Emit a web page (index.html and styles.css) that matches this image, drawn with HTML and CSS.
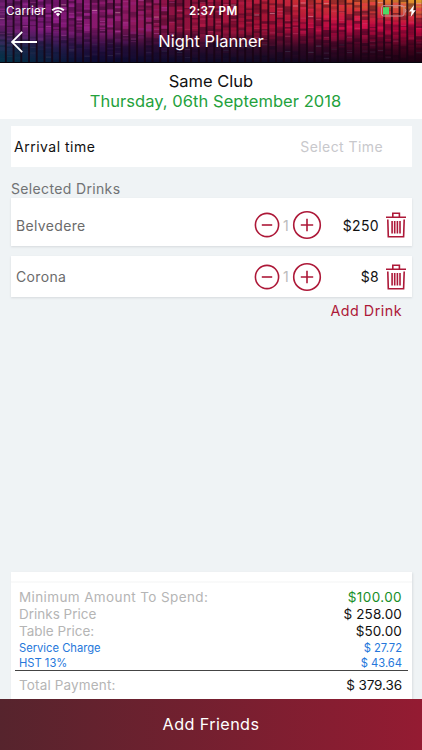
FILE: index.html
```html
<!DOCTYPE html>
<html lang="en"><head><meta charset="utf-8"><meta name="viewport" content="width=device-width"><title>Night Planner</title><link rel="stylesheet" href="styles.css"></head>
<body>
<svg class="defs" width="0" height="0" aria-hidden="true">
<symbol id="minus" viewBox="0 0 26 26"><circle cx="13" cy="13" r="11.6"/><path d="M7.8 13h10.4"/></symbol>
<symbol id="plus" viewBox="0 0 30 30"><circle cx="15" cy="15" r="13.3"/><path d="M8.8 15h12.4M15 8.8v12.4"/></symbol>
<symbol id="trash" viewBox="0 0 20 26"><path d="M0 5.2h20M6.8 5V1.2h6.6V5M1.8 7.5l.5 17.2h15.3l.6-17.2M6.1 9v12.5M8.7 9v12.5M11.4 9v12.5M14 9v12.5"/></symbol>
</svg>
<header class="header">
<svg class="lights" id="lights" viewBox="0 0 422 63" preserveAspectRatio="none">
<defs>
<linearGradient id="hue"><stop offset="0" stop-color="#5d1b62"/><stop offset=".12" stop-color="#7d1878"/><stop offset=".28" stop-color="#8e1a68"/><stop offset=".42" stop-color="#8e123f"/><stop offset=".6" stop-color="#a01035"/><stop offset=".8" stop-color="#b80a42"/><stop offset="1" stop-color="#c80840"/></linearGradient>
<linearGradient id="warm"><stop offset=".55" stop-color="#f35a24" stop-opacity="0"/><stop offset=".8" stop-color="#ee6526" stop-opacity=".65"/><stop offset="1" stop-color="#e0a72b"/></linearGradient>
<linearGradient id="cool"><stop offset="0" stop-color="#003448"/><stop offset=".22" stop-color="#080b30"/><stop offset=".6" stop-color="#0b0a24"/><stop offset="1" stop-color="#16000f"/></linearGradient>
<linearGradient id="fall" x2="0" y2="1"><stop offset=".45" stop-color="#000"/><stop offset=".75" stop-color="#bbb"/><stop offset="1" stop-color="#fff"/></linearGradient>
<linearGradient id="rise" x2="0" y2="1"><stop offset="0" stop-color="#fff"/><stop offset=".4" stop-color="#000"/></linearGradient>
<mask id="lower"><rect width="422" height="63" fill="url(#fall)"/></mask><mask id="upper"><rect width="422" height="63" fill="url(#rise)"/></mask>
</defs>
<rect width="422" height="63" fill="url(#hue)"/>
<rect width="422" height="63" fill="url(#warm)" mask="url(#upper)"/>
<g id="cells"></g>
<rect width="422" height="63" fill="url(#cool)" mask="url(#lower)"/>
<g id="glints"></g><g id="bars"></g>
<rect y="62" width="422" height="1" fill="#07050d"/>
</svg>
<div class="status"><span class="carrier">Carrier</span>
<svg class="wifi" viewBox="0 0 14 11"><path d="M.5 3.5a9.5 9.5 0 0 1 13 0L12.2 5a7.5 7.5 0 0 0-10.4 0ZM2.7 5.9a6.3 6.3 0 0 1 8.6 0L10 7.2a4.5 4.5 0 0 0-6 0ZM4.8 8a3.3 3.3 0 0 1 4.4 0L7 10.4Z"/></svg>
<span class="clock">2:37 PM</span>
<svg class="battery" viewBox="0 0 36 12"><rect class="shell" x=".5" y=".7" width="22.5" height="10.3" rx="2"/><path class="tip" d="M24.2 4q1.3 1.8 0 3.6"/><rect class="charge" x="2" y="2.2" width="6" height="7.3"/><path class="bolt" d="m33 0-5 6.5h2.6L29.7 12l5-6.8h-2.6z"/></svg></div>
<div class="nav"><svg class="back" viewBox="0 0 27 22"><path d="M26 11H1M11.2.8 1 11l10.2 10.2"/></svg><h1 class="title">Night Planner</h1></div>
</header>
<section class="club"><div class="club-name">Same Club</div><div class="club-date">Thursday, 06th September 2018</div></section>
<main class="content">
<section class="arrival"><span class="arrival-label">Arrival time</span><span class="arrival-time">Select Time</span></section>
<h2 class="heading"><span>Selected Drinks</span></h2>
<article class="drink drink-first"><span class="drink-name">Belvedere</span><svg class="minus"><use href="#minus"/></svg><span class="qty">1</span><svg class="plus"><use href="#plus"/></svg><span class="price">$250</span><svg class="trash"><use href="#trash"/></svg></article>
<article class="drink"><span class="drink-name">Corona</span><svg class="minus"><use href="#minus"/></svg><span class="qty">1</span><svg class="plus"><use href="#plus"/></svg><span class="price">$8</span><svg class="trash"><use href="#trash"/></svg></article>
<div class="add-drink"><span>Add Drink</span></div>
<section class="summary">
<div class="row"><span class="minimum">Minimum Amount To Spend:</span><span class="amount green">$100.00</span></div>
<div class="row"><span>Drinks Price</span><span class="amount">$ 258.00</span></div>
<div class="row"><span>Table Price:</span><span class="amount">$50.00</span></div>
<div class="row fee"><span>Service Charge</span><span>$ 27.72</span></div>
<div class="row fee"><span>HST 13%</span><span>$ 43.64</span></div>
<div class="row total"><span class="total-label">Total Payment:</span><span class="amount grand">$ 379.36</span></div>
</section>
</main>
<footer class="footer"><span>Add Friends</span></footer>
<script src="lights.js"></script>
</body></html>
```
FILE: styles.css
```css
*{box-sizing:border-box}
body{margin:0;width:422px;height:750px;display:flex;flex-direction:column;overflow:hidden;background:#eff3f5;font-family:Inter,"Liberation Sans",sans-serif;color:#111}
.defs{position:absolute}
.header{position:relative;height:63px;flex:none;background:#25091b;color:#fff;overflow:hidden}
.lights{position:absolute;inset:0;width:100%;height:100%}
.status{position:relative;height:22px;display:grid;grid-template-columns:45px 138px 194px 36px;padding-left:6px;align-items:center;font-size:11.7px;line-height:22px}
.carrier{letter-spacing:.2px}
.wifi{width:14px;height:11px;fill:#fff}
.clock{font-weight:600;letter-spacing:.3px}
.battery{width:36px;height:12px;margin-left:-2px}
.shell{fill:none;stroke:#c99098;stroke-width:1}
.tip{fill:none;stroke:#c99098}
.charge{fill:#4cd964}
.bolt{fill:#fff}
.nav{position:relative;height:41px;display:grid;grid-template-columns:38px 1fr 38px;align-items:center}
.back{width:27px;height:22px;margin-left:11px;margin-top:-2px;fill:none;stroke:#fff;stroke-width:1.8}
.title{margin:-3px 0 0;text-align:center;font-size:16.5px;font-weight:400;line-height:22px}
.club{height:56px;flex:none;background:#fff;text-align:center;padding-top:8px;font-size:16.5px;line-height:20px}
.club-date{color:#24a13c;padding-left:9px;letter-spacing:.05px}
.content{height:580px;flex:none;padding:7px 10px 0 11px;display:flex;flex-direction:column}
.arrival{height:41px;flex:none;background:#fff;display:flex;justify-content:space-between;align-items:center;padding:0 29px 0 3px;font-size:14px;letter-spacing:.5px}
.arrival-time{color:#c8c8cc;letter-spacing:.42px}
.heading{margin:12px 0 0;height:19px;flex:none;color:#707274;font-size:14px;line-height:20px;font-weight:400;letter-spacing:.35px}
.drink{height:41px;flex:none;margin-top:10px;padding:0 5px 0 5px;background:#fff;box-shadow:0 1px 2px #d7dadd;display:grid;grid-template-columns:238px 26px 12px 29px 58px 7px 20px;align-items:center;font-size:14px;color:#6b6b6b;letter-spacing:.35px}
.drink-first{height:48px;padding-top:6px;margin-top:0}
.minus,.plus,.trash{fill:none;stroke:#ad1838;stroke-width:1.6}
.minus{width:26px;height:26px}
.plus{width:30px;height:30px}
.trash{width:20px;height:26px;grid-column:7;stroke-width:1.6}
.qty{color:#bbb;text-align:center}
.price{color:#111;text-align:right}
.add-drink{height:27px;color:#ad1838;text-align:right;padding-right:10px;font-size:14.3px;line-height:27px;letter-spacing:.5px}
.summary{height:127px;flex:none;margin-top:auto;background:linear-gradient(#fff 9px,#f3f4f4 10px,#fff 11px);box-shadow:1px 1px 2px #d9dde0;padding:16px 10px 0 8px;font-size:13.5px}
.row{height:17.4px;display:flex;justify-content:space-between;align-items:center;color:#b5b5b5}
.minimum{letter-spacing:.38px}
.total-label{letter-spacing:.15px}
.amount{color:#111;letter-spacing:.12px}
.green{color:#178e27;letter-spacing:.4px}
.grand{letter-spacing:-.1px}
.fee{height:15px;color:#2577db;font-size:11.2px}
.total{height:28px;margin:0 -6px 0 -4px;padding:0 6px 0 4px;border-top:1px solid #444}
.footer{height:51px;flex:none;background:linear-gradient(90deg,#56242d,#941b32);display:flex;align-items:center;justify-content:center;color:#fff;font-size:16.2px;line-height:20px;padding-bottom:2px;letter-spacing:.4px}
```
FILE: lights.js
```js
// Seeded LED-wall texture: striped columns with dark dividers.
let seed = 73;
const random = () => (seed = (seed * 16807) % 2147483647) / 2147483647;
const add = (id, x, y, width, height, fill, opacity) => {
  const rect = document.createElementNS('http://www.w3.org/2000/svg', 'rect');
  Object.entries({ x, y, width, height, fill, opacity }).forEach(([k, v]) => rect.setAttribute(k, v));
  document.getElementById(id).append(rect);
};
for (let x = -1; x < 422; x += 7.72) {
  for (let y = 0; y < 62;) {
    const h = 1 + random() * 2.8;
    const shade = random();
    const bright = x < 165 ? '#a42c9b' : x < 300 ? '#c5204c' : '#e81c58';
    if (shade < .4) add('cells', x, y, 7, h, '#22051d', .1 + random() * .4);
    else if (shade > .76) add('cells', x, y, 7, h, bright, .15 + random() * .35);
    y += h;
  }
  for (let i = 0; i < 3; i++) {
    const y = random() * 60;
    add('glints', x + .5, y, 5.5, .9, y > 43 ? '#48445d' : x < 180 ? '#c052af' : '#d04978', .2 + random() * .3);
  }
  if (random() > .65) add('glints', x + .5, random() * 20, 5, 1, '#e5b0bf', .5);
  add('bars', x + 5.9, 0, 1.9, 63, '#160312', .8);
}
```
